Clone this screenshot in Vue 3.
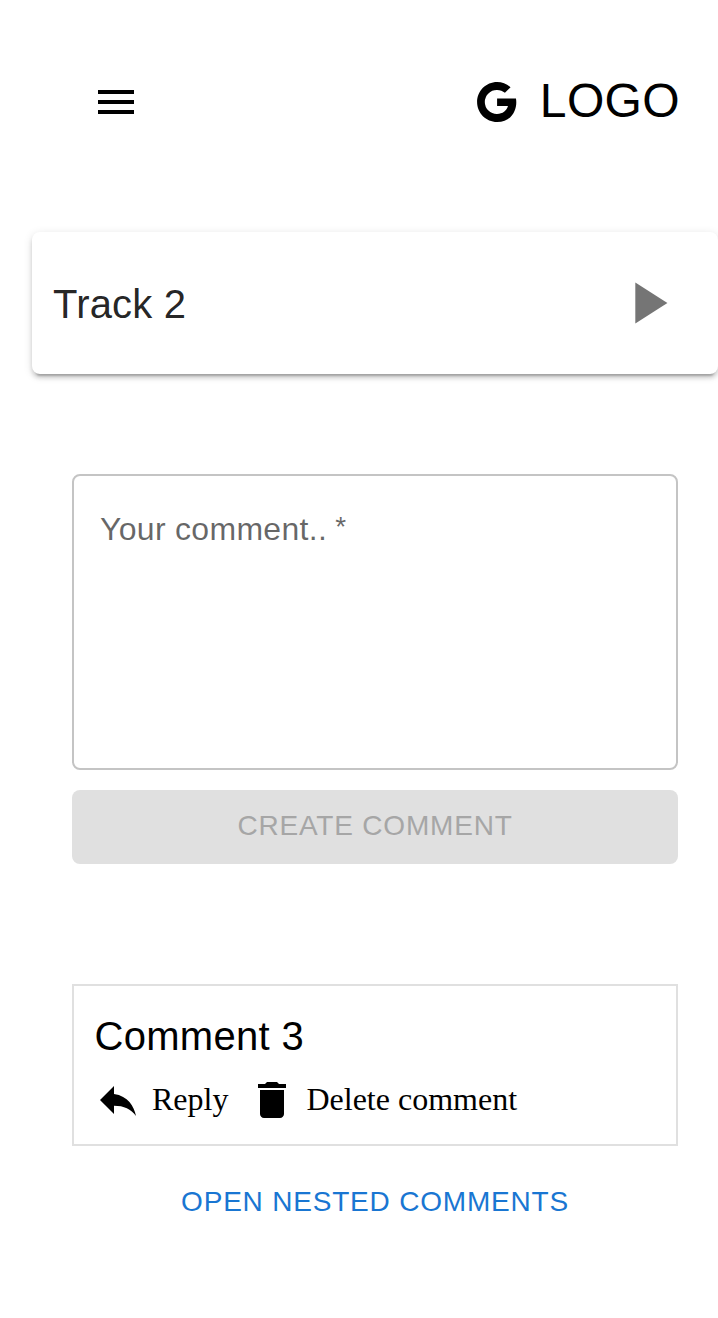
<script setup>
</script>

<template>
  <div class="page">
    <header class="header">
      <svg class="menu" viewBox="0 0 24 24"><path d="M3 18h18v-2H3v2zm0-5h18v-2H3v2zm0-7v2h18V6H3z" /></svg>
      <div class="brand">
        <svg class="g" viewBox="0 0 24 24"><path d="M12.545 10.239v3.821h5.445c-.712 2.315-2.647 3.972-5.445 3.972a6.033 6.033 0 1 1 0-12.064c1.498 0 2.866.549 3.921 1.453l2.814-2.814A9.969 9.969 0 0 0 12.545 2C7.021 2 2.543 6.477 2.543 12s4.478 10 10.002 10c8.396 0 10.249-7.85 9.426-11.748l-9.426-.013z" /></svg>
        <span class="logo">LOGO</span>
      </div>
    </header>
    <section class="track">
      <span class="title">Track 2</span>
      <svg class="play" viewBox="0 0 24 24"><path d="M8 5v14l11-7z" /></svg>
    </section>
    <main class="content">
      <div class="field"><span>Your comment..</span><span class="star">*</span></div>
      <button class="create" disabled>CREATE COMMENT</button>
      <article class="comment">
        <div class="text">Comment 3</div>
        <div class="actions">
          <svg class="reply" viewBox="0 0 24 24"><path d="M10 9V5l-7 7 7 7v-4.100c5 0 8.500 1.600 11 5.100-1-5-4-10-11-11z" /></svg>
          <span class="reply-label">Reply</span>
          <svg class="trash" viewBox="0 0 24 24"><path d="M6 19c0 1.100.9 2 2 2h8c1.100 0 2-.9 2-2V7H6v12zM19 4h-3.500l-1-1h-5l-1 1H5v2h14V4z" /></svg>
          <span>Delete comment</span>
        </div>
      </article>
      <button class="nested">OPEN NESTED COMMENTS</button>
    </main>
  </div>
</template>

<style scoped>
.page { height: 1318px; overflow: hidden; background: #fff; font-family: "Liberation Sans", Arial, sans-serif; color: #000; box-sizing: border-box; padding-top: 62px; }
svg { display: block; flex: none; }
.header { height: 80px; display: flex; align-items: center; justify-content: space-between; padding: 0 38px 0 92px; }
.menu { width: 48px; height: 48px; }
.brand { display: flex; align-items: center; }
.g { width: 48px; height: 48px; margin-right: 20px; }
.logo { font-size: 48px; line-height: 76px; padding-bottom: 2px; letter-spacing: .36px; }
.track { margin: 90px 0 0 32px; height: 142px; box-sizing: border-box; padding: 0 36px 0 21px; display: flex; align-items: center; justify-content: space-between; border-radius: 8px; box-shadow: 0 6px 2px -4px rgba(0,0,0,.2), 0 4px 4px rgba(0,0,0,.14), 0 2px 10px rgba(0,0,0,.12); color: rgba(0,0,0,.87); }
.title { font-size: 40px; letter-spacing: .2px; padding-top: 2px; }
.play { width: 70px; height: 70px; fill: #757575; }
.content { padding: 100px 40px 0 72px; }
.field { box-sizing: border-box; height: 296px; border: 2px solid #c4c4c4; border-radius: 8px; padding: 35px 26px; font-size: 32px; line-height: 37px; letter-spacing: .3px; color: rgba(0,0,0,.6); }
.star { margin-left: 8px; font-size: 28px; line-height: 1; vertical-align: 4px; }
button { display: block; width: 100%; border: 0; font-family: inherit; padding: 0; }
.create { height: 74px; margin-top: 20px; border-radius: 8px; background: #e0e0e0; color: #a6a6a6; font-size: 28px; letter-spacing: .8px; padding-bottom: 2px; }
.comment { box-sizing: border-box; height: 162px; margin-top: 120px; border: 2px solid #e0e0e0; padding: 20px; }
.text { font-size: 40px; line-height: 60px; letter-spacing: .3px; padding-left: .5px; }
.actions { display: flex; align-items: center; height: 68px; font-family: "Liberation Serif", "Times New Roman", serif; font-size: 32px; }
.actions span { padding-bottom: 1px; }
.reply, .trash { width: 48px; height: 48px; }
.reply-label { margin: 0 20px 0 10px; }
.trash { margin-right: 10px; }
.nested { height: 73px; margin-top: 20px; background: transparent; color: #1976d2; font-size: 28px; letter-spacing: .8px; padding-bottom: 1px; }
</style>
